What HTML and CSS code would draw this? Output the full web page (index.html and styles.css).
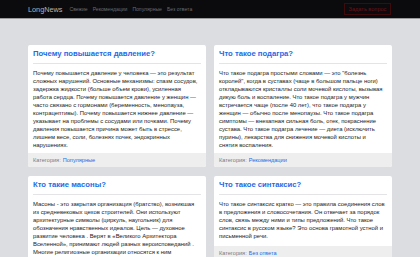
FILE: index.html
```html
<!DOCTYPE html>
<html lang="ru">
<head>
<meta charset="utf-8">
<title>LongNews</title>
<link rel="stylesheet" href="styles.css">
</head>
<body>
<header class="topbar">
  <div class="wrap topbar-inner">
    <nav class="nav">
      <a class="logo" href="#">LongNews</a>
      <a class="nav-link" href="#">Свежие</a>
      <a class="nav-link" href="#">Рекомендации</a>
      <a class="nav-link" href="#">Популярные</a>
      <a class="nav-link" href="#">Без ответа</a>
    </nav>
    <a class="ask" href="#">Задать вопрос</a>
  </div>
</header>
<main class="wrap grid">
  <article class="card">
    <h2 class="card-title"><a href="#">Почему повышается давление?</a></h2>
    <p class="card-text">Почему повышается давление у человека — это результат<br>сложных нарушений. Основные механизмы: спазм сосудов,<br>задержка жидкости (больше объем крови), усиленная<br>работа сердца. Почему повышается давление у женщин —<br>часто связано с гормонами (беременность, менопауза,<br>контрацептивы). Почему повышается нижнее давление —<br>указывает на проблемы с сосудами или почками. Почему<br>давления повышается причина может быть в стрессе,<br>лишнем весе, соли, болезнях почек, эндокринных<br>нарушениях.</p>
    <div class="card-foot">Категория: <a href="#">Популярные</a></div>
  </article>
  <article class="card">
    <h2 class="card-title"><a href="#">Что такое подагра?</a></h2>
    <p class="card-text">Что такое подагра простыми словами — это "болезнь<br>королей", когда в суставах (чаще в большом пальце ноги)<br>откладываются кристаллы соли мочевой кислоты, вызывая<br>дикую боль и воспаление. Что такое подагра у мужчин<br>встречается чаще (после 40 лет), что такое подагра у<br>женщин — обычно после менопаузы. Что такое подагра<br>симптомы — внезапная сильная боль, отек, покраснение<br>сустава. Что такое подагра лечение — диета (исключить<br>пурины), лекарства для снижения мочевой кислоты и<br>снятия воспаления.</p>
    <div class="card-foot">Категория: <a href="#">Рекомендации</a></div>
  </article>
  <article class="card">
    <h2 class="card-title"><a href="#">Кто такие масоны?</a></h2>
    <p class="card-text">Масоны - это закрытая организация (братство), возникшая<br>из средневековых цехов строителей. Они используют<br>архитектурные символы (циркуль, наугольник) для<br>обозначения нравственных идеалов. Цель — духовное<br>развитие человека . Верят в «Великого Архитектора<br>Вселенной», принимают людей разных вероисповеданий .<br>Многие религиозные организации относятся к ним</p>
  </article>
  <article class="card">
    <h2 class="card-title"><a href="#">Что такое синтаксис?</a></h2>
    <p class="card-text">Что такое синтаксис кратко — это правила соединения слов<br>в предложения и словосочетания. Он отвечает за порядок<br>слов, связь между ними и типы предложений. Что такое<br>синтаксис в русском языке? Это основа грамотной устной и<br>письменной речи.</p>
    <div class="card-foot">Категория: <a href="#">Без ответа</a></div>
  </article>
</main>
</body>
</html>
```
FILE: styles.css
```css
* { box-sizing: border-box; }
html, body { margin: 0; padding: 0; }
body {
  background: #dcdde0;
  font-family: "Liberation Sans", Arial, sans-serif;
  color: #1a1a1a;
  overflow: hidden;
}
a { text-decoration: none; }
.wrap { width: 364px; margin: 0 auto; }

.topbar {
  background: #0b0b0e;
  height: 19px;
  border-bottom: 1px solid #9a9a9c;
}
.topbar-inner {
  height: 18px;
  display: flex;
  align-items: center;
  justify-content: space-between;
}
.nav { display: flex; align-items: center; gap: 5px; }
.logo {
  color: #b4b4b8;
  font-size: 7.3px;
  margin-right: 2px;
}
.nav-link {
  color: #6a6a6e;
  font-size: 5.1px;
}
.ask {
  display: flex;
  align-items: center;
  justify-content: center;
  width: 47px;
  height: 12px;
  border: 1px solid #3e0a0c;
  color: #6e1216;
  font-size: 5.6px;
  margin-right: 1px;
}

.grid {
  display: grid;
  grid-template-columns: 1fr 1fr;
  column-gap: 8px;
  row-gap: 9px;
  padding-top: 26px;
}
.card {
  background: #fff;
  border-radius: 2px;
  overflow: hidden;
  display: flex;
  flex-direction: column;
}
.card-title {
  margin: 0 5px;
  padding: 4px 0 4px;
  border-bottom: 1px solid #e4e4e6;
  font-size: 7.7px;
  line-height: 10px;
  font-weight: bold;
}
.card-title a { color: #1c6be6; }
.card-text {
  margin: 0;
  padding: 5px 5px 4px;
  font-size: 5.9px;
  line-height: 8px;
  white-space: nowrap;
  flex: 1;
}
.card-foot {
  background: #eeeeef;
  padding: 0 5px;
  height: 14px;
  display: flex;
  align-items: center;
  gap: 2px;
  font-size: 5.6px;
  color: #7a7a7e;
}
.card-foot a { color: #1c6be6; }
```
